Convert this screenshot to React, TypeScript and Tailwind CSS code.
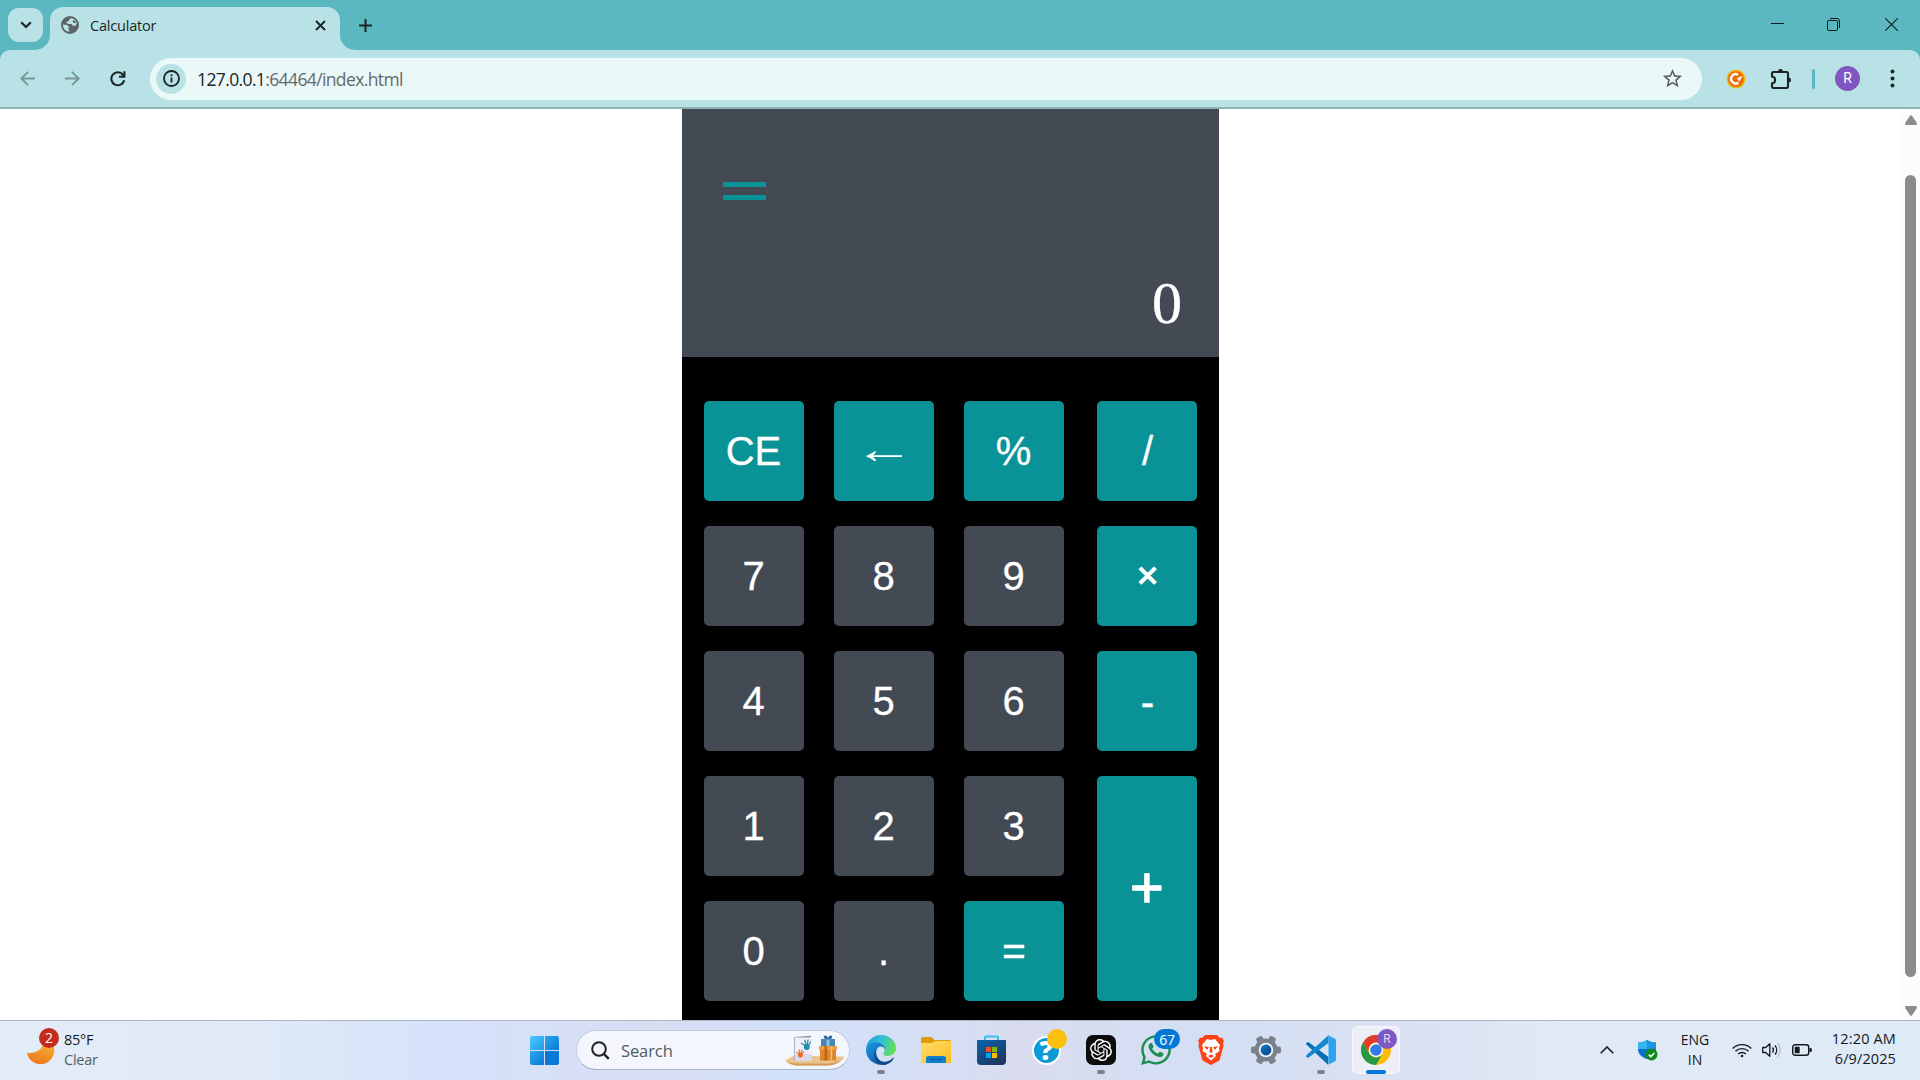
import React from "react";
import { MdPublic, MdOutlineStarBorder } from "react-icons/md";
import { SiOpenai } from "react-icons/si";
import { FaWhatsapp } from "react-icons/fa";

const TEAL = "bg-[#0a9396]";
const SLATE = "bg-[#444a54]";

function TabStrip() {
  return (
    <div className="flex h-[50px] bg-[#5bb8c1] pl-2">
      <button className="mt-2 flex h-[34px] w-[35px] items-center justify-center rounded-[11px] bg-[#b8e2e5]">
        <svg width="12" height="8" viewBox="0 0 12 8" fill="none" stroke="#1c2426" strokeWidth="2.2">
          <path d="M1.2 1.2 6 6l4.8-4.8" />
        </svg>
      </button>
      <svg className="mt-[35px] -ml-[8px]" width="15" height="15" viewBox="0 0 15 15">
        <path d="M15 0A15 15 0 0 1 0 15H15Z" fill="#b8e2e5" />
      </svg>
      <div className="mt-[7px] flex h-[43px] w-[290px] items-center rounded-t-[13px] bg-[#b8e2e5] pr-[15px] pb-[7px] pl-[11px]">
        <svg width="18" height="18" viewBox="0 0 18 18">
          <circle cx="9" cy="9" r="9" fill="#5f6368" />
          <path d="M10 2.200 8.200 3.200 7.800 5 5.800 5.500 5.500 7.300 7.500 8h3l1.500 1.800h2.500l1.300-2.300C15.500 4.500 13.500 2.500 10 2.200ZM2 8.500l4 .5 2.200 2-1 1.500 1.300 3.300C4.500 15.500 1.800 12.500 2 8.500Z" fill="#b8e2e5" />
          <path d="m12 4.300 2 .4 1 1.800-1.500.7-1.700-1Z" fill="#5f6368" />
        </svg>
        <span className="mt-[1px] ml-[11px] flex-1 font-['Open_Sans',sans-serif] text-[14.5px] leading-5 tracking-[-0.2px] text-[#1c2426]">Calculator</span>
        <svg className="mr-[-1px]" width="11" height="11" viewBox="0 0 11 11" stroke="#1c2426" strokeWidth="1.900">
          <path d="m1 1 9 9M10 1l-9 9" />
        </svg>
      </div>
      <svg className="mt-[35px]" width="15" height="15" viewBox="0 0 15 15">
        <path d="M0 0A15 15 0 0 0 15 15H0Z" fill="#b8e2e5" />
      </svg>
      <svg className="mt-[19px] ml-[4px]" width="13" height="13" viewBox="0 0 13 13" stroke="#1c2426" strokeWidth="2">
        <path d="M6.500 0v13M0 6.500h13" />
      </svg>
      <div className="ml-auto flex pr-[22px]">
        <svg className="mt-[18px] mr-[43px]" width="13" height="13" viewBox="0 0 13 13" stroke="#101818">
          <path d="M0 5.500h13" />
        </svg>
        <svg className="mt-[18px] mr-[45px]" width="13" height="13" viewBox="0 0 13 13" fill="none" stroke="#101818">
          <rect x=".5" y="2.500" width="10" height="10" rx="1.2" />
          <path d="M3 .5h7a2.500 2.500 0 0 1 2.500 2.500v7" />
        </svg>
        <svg className="mt-[18px]" width="13" height="13" viewBox="0 0 13 13" stroke="#101818" strokeWidth="1.1">
          <path d="m.3.3 12.400 12.400M12.700.3.3 12.700" />
        </svg>
      </div>
    </div>
  );
}

function Toolbar() {
  return (
    <div className="bg-[#5bb8c1]">
      <div className="flex h-[59px] items-center rounded-t-[10px] border-b-2 border-[#8fb3b7] bg-[#b8e2e5] pl-5">
        <svg width="15" height="15" viewBox="0 0 15 15" fill="none" stroke="#7a9699" strokeWidth="1.9">
          <path d="M15 7.500H1.500M8 .8 1.300 7.500 8 14.200" />
        </svg>
        <svg className="ml-[30px]" width="15" height="15" viewBox="0 0 15 15" fill="none" stroke="#7a9699" strokeWidth="1.9">
          <path d="M0 7.500h13.500M7 .8l6.700 6.700L7 14.200" />
        </svg>
        <svg className="ml-[30px]" width="16" height="16" viewBox="0 0 16 16" fill="none" stroke="#1c2426" strokeWidth="2.1">
          <path d="M14.200 9.200A6.500 6.500 0 1 1 13 3.800l1 1.500M14.400.3v5.400H9" />
        </svg>
        <div className="ml-[24px] flex h-[42px] w-[1552px] items-center rounded-full bg-[#ebf8f8] pr-[18px] pl-[6px]">
          <div className="flex h-[30px] w-[30px] items-center justify-center rounded-full bg-[#b8e2e5]">
            <svg width="17" height="17" viewBox="0 0 17 17" fill="none" stroke="#1c2426" strokeWidth="1.8">
              <circle cx="8.500" cy="8.500" r="7.500" />
              <path d="M8.500 7.500v5M8.500 4.300v2" />
            </svg>
          </div>
          <div className="mt-[1px] ml-[11px] flex-1 font-['Open_Sans',sans-serif] text-[17.5px] leading-6 tracking-[-0.620px] text-[#1c2426]">
            127.0.0.1<span className="text-[#62696b]">:64464/index.html</span>
          </div>
          <MdOutlineStarBorder className="h-[23px] w-[23px] text-[#565c5e]" />
        </div>
        <svg className="ml-[24px]" width="20" height="20" viewBox="0 0 20 20">
          <circle cx="10" cy="10" r="8.700" fill="#ed6c05" stroke="#f6b90c" strokeWidth="1.700" strokeDasharray="3.200 .7" />
          <path d="M12 5.800a4.600 4.600 0 1 0 .4 7.800" fill="none" stroke="#fff" strokeWidth="2.500" />
          <path d="m16.700 6.800-6.200 2.700 1.900 1 .6 2.600Z" fill="#fff" />
        </svg>
        <svg className="ml-[24px]" width="22" height="22" viewBox="0 0 22 22" fill="none" stroke="#1c2426" strokeWidth="2.100">
          <path d="M3.200 4h13.600q1.200 0 1.200 1.200v13.600q0 1.200-1.200 1.200H3.200Q2 20 2 18.800V15.500c4.200-.8 4.200-6.200 0-7V5.200Q2 4 3.200 4Z" />
          <path d="M8 3.500a2.500 2.500 0 0 1 5 0ZM18.500 9.500a2.500 2.500 0 0 1 0 5Z" fill="#1c2426" stroke="none" />
        </svg>
        <div className="ml-[20px] h-5 w-[3px] rounded-full bg-[#5bb8c1]" />
        <div className="ml-[20px] flex h-[25px] w-[25px] items-center justify-center rounded-full bg-[#7e57c2] font-[Roboto,sans-serif] text-[14px] text-white">R</div>
        <svg className="ml-[30px]" width="5" height="19" viewBox="0 0 5 19" fill="#1c2426">
          <circle cx="2.500" cy="2.500" r="2" />
          <circle cx="2.500" cy="9.500" r="2" />
          <circle cx="2.500" cy="16.500" r="2" />
        </svg>
      </div>
    </div>
  );
}

interface KeyProps {
  label: string;
  teal?: boolean;
  size?: string;
  glyph?: string;
}

function Key({ label, teal = false, size = "h-[100px]", glyph = "pr-px text-[40px] [-webkit-text-stroke:0.3px_white]" }: KeyProps) {
  return (
    <button className={`flex w-[100px] items-center justify-center rounded-[5px] leading-none text-white ${size} ${teal ? TEAL : SLATE}`}>
      <span className={glyph}>{label}</span>
    </button>
  );
}

function Calculator() {
  const digits = ["7", "8", "9", "4", "5", "6", "1", "2", "3", "0", "."];
  return (
    <div className="flex h-full w-[537px] flex-col bg-black">
      <div className={`flex h-[248px] flex-col justify-between px-[37px] ${SLATE}`}>
        <div className="mt-[73px] ml-[4px] flex flex-col gap-2">
          <div className={`h-[5px] w-[43px] ${TEAL}`} />
          <div className={`h-[5px] w-[43px] ${TEAL}`} />
        </div>
        <div className="mb-[20px] text-right font-['Liberation_Serif',serif] text-[60px] leading-[68px] text-white [-webkit-text-stroke:0.4px_white]">0</div>
      </div>
      <div className="flex gap-[33px] pt-[44px] pl-[22px] font-['Liberation_Sans',sans-serif]">
        <div className="grid grid-cols-[100px_100px_100px] gap-x-[30px] gap-y-[25px]">
          <Key label="CE" teal />
          <Key label="←" teal glyph="inline-block origin-center scale-x-150 pb-[5px] text-[40px]" />
          <Key label="%" teal />
          {digits.map((d) => (
            <Key key={d} label={d} />
          ))}
          <Key label="=" teal glyph="text-[40px] [-webkit-text-stroke:0.7px_white]" />
        </div>
        <div className="flex flex-col gap-[25px]">
          <Key label="/" teal glyph="pl-px text-[40px] [-webkit-text-stroke:0.3px_white]" />
          <Key label="×" teal glyph="pb-px pl-px text-[37px] [-webkit-text-stroke:1.200px_white]" />
          <Key label="-" teal glyph="pt-[2px] pl-px text-[40px] [-webkit-text-stroke:0.5px_white]" />
          <Key label="+" teal size="h-[225px]" glyph="pb-[3px] text-[58px] [-webkit-text-stroke:1.300px_white]" />
        </div>
      </div>
    </div>
  );
}

function ScrollBar() {
  return (
    <div className="flex w-[19px] flex-col items-center bg-[#fcfcfc]">
      <svg className="mt-[6px]" width="12" height="10" viewBox="0 0 12 10" fill="#8b8b8b">
        <path d="M5 .8q1-1 2 0l4.700 7q.8 2.200-1 2.200H1.300Q-.5 10 .3 7.800Z" />
      </svg>
      <div className="mt-[50px] h-[802px] w-[11px] rounded-full bg-[#8b8b8b]" />
      <svg className="mt-[29px]" width="12" height="10" viewBox="0 0 12 10" fill="#8b8b8b">
        <path d="M5 9.200q1 1 2 0l4.700-7Q12.500 0 10.700 0H1.300Q-.5 0 .3 2.200Z" />
      </svg>
    </div>
  );
}

function AppSlot({ children, running = false, active = false }: { children: React.ReactNode; running?: boolean; active?: boolean }) {
  return (
    <div className={`relative flex h-12 w-12 items-center justify-center rounded-[5px] ${active ? "border border-white/60 bg-[#eceef8]" : ""}`}>
      {children}
      {running && <div className="absolute bottom-0 left-[20px] h-1 w-2 rounded-full bg-[#7d8089]" />}
      {active && <div className="absolute -bottom-px left-[13px] h-1 w-5 rounded-full bg-[#0078d4]" />}
    </div>
  );
}

function StartLogo() {
  return (
    <svg width="29" height="29" viewBox="0 0 29 29">
      <defs>
        <linearGradient id="win" x1="0" y1="0" x2="1" y2="1">
          <stop offset="0" stopColor="#4cc9fb" />
          <stop offset="1" stopColor="#1d9ae8" />
        </linearGradient>
        <linearGradient id="win2" x1="0" y1="0" x2="1" y2="1">
          <stop offset="0" stopColor="#2ba6ee" />
          <stop offset="1" stopColor="#0a7bd8" />
        </linearGradient>
      </defs>
      <path d="M1.500 0H14v14H0V1.500Z" fill="url(#win)" />
      <path d="M15 0h12.500L29 1.500V14H15Z" fill="url(#win2)" />
      <path d="M0 15h14v14H1.500L0 27.500Z" fill="url(#win2)" />
      <path d="M15 15h14v12.500L27.500 29H15Z" fill="#0a78d6" />
    </svg>
  );
}

function GiftArt() {
  return (
    <svg width="60" height="32" viewBox="0 0 60 32">
      <path d="M0 25.500 8 21l50 .5c2.500 0 1 2-1 3.500-4 3.500-8 5.500-14 5.500H12c-4 0-8-2-12-5Z" fill="#eac48c" />
      <path d="M0 25.500q5 4.500 12 5h31c6-.5 10-2.500 13-5-7 2.500-11 3-16 3H12c-5 0-9-.8-12-3Z" fill="#d29a58" />
      <path d="M9 2 26 .8v2L10 3.500Z" fill="#8b93a8" />
      <path d="M9 2h1.200v24L9 25.500Z" fill="#aab3c8" />
      <path d="M10 2.500h17v23H10Z" fill="#f1f0fa" />
      <path d="M10 19h17v6.500H10Z" fill="#dcd8ec" />
      <g stroke="#1b91ae" strokeLinecap="round" strokeWidth="1.300">
        <path d="m20 10.500-3.500-2m4.500 1.500-1.200-4.500m2.500 4.500.7-5m.5 5.500 2-3.500" />
        <circle cx="21.800" cy="12" r="2.300" fill="#1b91ae" />
      </g>
      <g stroke="#f06a25" strokeLinecap="round" strokeWidth="1.100">
        <path d="m14 19-2.200-1.800m3 1.200-.8-3.700m2 3.700.8-3.700m.2 4 1.800-2" />
        <circle cx="15.500" cy="20.300" r="1.900" fill="#f06a25" />
      </g>
      <path d="M34 11h18v4H34Z" fill="#ef9d47" />
      <path d="M35 15h16v10.500H35Z" fill="#df8429" />
      <path d="M39.500 11H42v14.500h-2.500Z" fill="#b8661a" />
      <path d="M45.500 11h1.700v14.500h-1.700Z" fill="#f8bd6d" />
      <path d="M36 4h14v7H36Z" fill="#4686b5" />
      <path d="M41.500 4h3v7h-3Z" fill="#8ac6e6" />
      <path d="M43 4.500c-5-.5-5-3-3-4C41.500 0 43 2.500 43 3.500 43 2.500 44.500 0 46 .5c2 1 2 3.500-3 4Z" fill="#2a6598" />
    </svg>
  );
}

function EdgeIcon() {
  return (
    <svg width="30" height="30" viewBox="0 0 30 30">
      <defs>
        <linearGradient id="edgeTop" x1="0" y1=".3" x2="1" y2=".6">
          <stop offset="0" stopColor="#1d9fe0" />
          <stop offset=".5" stopColor="#35c1d4" />
          <stop offset="1" stopColor="#6ae04f" />
        </linearGradient>
        <linearGradient id="edgeBody" x1="0" y1="0" x2="1" y2="1">
          <stop offset="0" stopColor="#1b9be0" />
          <stop offset="1" stopColor="#0b4e9e" />
        </linearGradient>
      </defs>
      <path d="M.2 13C1 5.500 7.500 0 15 0c9 0 15 6.500 15 13 0 5-4 8-8.500 8-3.500 0-5-1.300-4-2.800 2.800-4.200-.5-8.200-5.500-8.200-5 0-9.500 1.500-11.800 3Z" fill="url(#edgeTop)" />
      <path d="M.2 13C2 9.500 6 7.500 10 7.500c5 0 9 3 9 7-.5-2-2-3-4-3-4 0-5.500 4-4.500 8 1 4.500 4.500 8.500 10 9.500C11 32.500-1.500 25 .2 13Z" fill="url(#edgeBody)" />
      <path d="M12.500 12.500c-4 2-4 10 1.500 13 4.500 2.500 9.500 1 13-2.800.8-.8 1 .2.5 1C24 30 16 32 11.500 27.500 6.500 23 7.500 15 12.500 12.500Z" fill="#114a8b" />
      <path d="M12.300 13.800c1.700-2.300 6-1.500 6 2 0 1.500-1 2-1 3.200 0 1.700 3.700 3.200 8 1.200-4 4-10 3.500-12.300-.2-1.300-2-1.500-4.500-.7-6.200Z" fill="#d9e0f4" />
    </svg>
  );
}

function FolderIcon() {
  return (
    <svg width="30" height="26" viewBox="0 0 30 26">
      <defs>
        <linearGradient id="folder" x1="0" y1="0" x2="1" y2="1">
          <stop offset="0" stopColor="#ffdc6b" />
          <stop offset="1" stopColor="#fcc021" />
        </linearGradient>
      </defs>
      <path d="M0 1.500Q0 0 1.500 0h8q1 0 1.800.8L13.500 3H28q2 0 2 2v5H0Z" fill="#dd9c05" />
      <path d="M0 6h10.500q1 0 1.800-.8L14 4h14.500q1.500 0 1.500 1.500V26H1.500Q0 26 0 24.500Z" fill="url(#folder)" />
      <path d="M5 26v-4.500Q5 19 7.500 19h15q2.500 0 2.500 2.500V26Z" fill="#137fce" />
      <path d="M9.500 22.500h11" stroke="#0b5a9e" strokeWidth="1.300" strokeLinecap="round" />
    </svg>
  );
}

function StoreIcon() {
  return (
    <svg width="29" height="30" viewBox="0 0 29 30">
      <defs>
        <linearGradient id="store" x1="0" y1="0" x2=".7" y2="1">
          <stop offset="0" stopColor="#0c63ae" />
          <stop offset="1" stopColor="#1f365f" />
        </linearGradient>
      </defs>
      <path d="M8 6V2.500Q8 1.500 9 1.500h11q1 0 1 1V6" fill="none" stroke="#35c0f0" strokeWidth="2" />
      <path d="M0 5h29v21q0 4-4 4H4q-4 0-4-4Z" fill="url(#store)" />
      <path d="M9 12h5v5H9Z" fill="#f25022" />
      <path d="M15 12h5v5h-5Z" fill="#7fba00" />
      <path d="M9 18h5v5H9Z" fill="#00a4ef" />
      <path d="M15 18h5v5h-5Z" fill="#ffb900" />
    </svg>
  );
}

function BraveIcon() {
  return (
    <svg width="26" height="30" viewBox="0 0 26 30">
      <path d="M7 0h12l3 3 2-.5 2 3.500-1 2 .5 3-4 14.500L13 30l-8.500-4.500L.5 11 1 8 0 6l2-3.500L4 3Z" fill="#fb4218" />
      <path d="m13 5 4-1 5 6-1 3 .5 3-4.500 3 1 2-5 4.500L8 21l1-2-4.500-3 .5-3-1-3 5-6Z" fill="#fff" />
      <path d="m6 11 5 1.200-2 2.800ZM20 11l-5 1.200 2 2.800ZM12 12h2l.5 5-1.500 1-1.500-1ZM10 21l3-1.500 3 1.500-3 2Z" fill="#fb4218" />
    </svg>
  );
}

function SettingsIcon() {
  return (
    <svg width="30" height="30" viewBox="0 0 30 30">
      <defs>
        <linearGradient id="gearHub" x1="0" y1="0" x2="1" y2="1">
          <stop offset="0" stopColor="#1273c9" />
          <stop offset="1" stopColor="#0b4487" />
        </linearGradient>
      </defs>
      <g fill="#79818a">
        <circle cx="15" cy="15" r="11.500" />
        {[0, 60, 120].map((a) => (
          <rect key={a} x="0" y="11.500" width="30" height="7" rx="2" transform={`rotate(${a} 15 15)`} />
        ))}
      </g>
      <circle cx="15" cy="15" r="7.300" fill="#eef1f7" />
      <circle cx="15" cy="15" r="5.400" fill="url(#gearHub)" />
    </svg>
  );
}

function CodeIcon() {
  return (
    <svg width="30" height="30" viewBox="0 0 30 30">
      <path d="M22.500 22 2.700 7.300Q2 6.800 1.300 7.300L.3 8.200q-.7.700 0 1.400L22 29.800Z" fill="#0b6fb5" />
      <path d="M.3 20.300q-.7.700 0 1.400l1 .9q.7.500 1.400 0L22.500 8V.200Z" fill="#1587ce" />
      <path d="m21.500 0 6.800 3.200q1.700.8 1.700 2.500v18.600q0 1.700-1.700 2.500L21.500 30q1-.5 1-2V2q0-1.500-1-2Z" fill="#2aa4ef" />
    </svg>
  );
}

function ChromeIcon() {
  return (
    <svg width="30" height="30" viewBox="0 0 30 30">
      <circle cx="15" cy="15" r="15" fill="#fbbc05" />
      <path d="M2 7.500A15 15 0 0 1 28 7.500H15A7.500 7.500 0 0 0 8.500 18.750Z" fill="#e33b2e" />
      <path d="M2 7.500 8.500 18.750A7.500 7.500 0 0 0 21.500 18.750L15 30A15 15 0 0 1 2 7.500Z" fill="#249a48" />
      <circle cx="15" cy="15" r="7.200" fill="#fff" />
      <circle cx="15" cy="15" r="5.800" fill="#3478ea" />
    </svg>
  );
}

function Weather() {
  return (
    <div className="flex h-full w-[500px] pl-[27px] font-['Open_Sans',sans-serif] text-[14.5px] leading-5">
      <div className="relative mt-[13px] h-[30px] w-[28px]">
        <svg width="28" height="30" viewBox="0 0 28 30">
          <defs>
            <linearGradient id="moon" x1=".7" y1="0" x2=".4" y2="1">
              <stop offset="0" stopColor="#f8bc38" />
              <stop offset="1" stopColor="#ed781d" />
            </linearGradient>
          </defs>
          <path d="M0 19c10 1 18-5 18-16 6 1 9 6 9 11A13.500 13.500 0 0 1 0 19Z" fill="url(#moon)" />
        </svg>
        <div className="absolute -top-[6px] left-[12px] flex h-5 w-5 items-center justify-center rounded-full bg-[#c42b1c] text-[14px] leading-none text-white">2</div>
      </div>
      <div className="mt-[9px] ml-[9px] tracking-[-0.25px]">
        <div className="text-[#15191d]">85°F</div>
        <div className="text-[#555c64]">Clear</div>
      </div>
    </div>
  );
}

function Tray() {
  return (
    <div className="ml-auto flex h-full pr-[24px] font-['Open_Sans',sans-serif] text-[14px] leading-5 text-[#15191d]">
      <svg className="mt-[25px]" width="14" height="8" viewBox="0 0 14 8" fill="none" stroke="#15191d" strokeWidth="1.600">
        <path d="M.7 7.300 7 1l6.300 6.300" />
      </svg>
      <svg className="mt-[19px] ml-[24px]" width="20" height="21" viewBox="0 0 20 21">
        <path d="M9 0c3 2 6 2.500 9 2.500V9c0 6-5 8.500-9 10-4-1.500-9-4-9-10V2.500C3 2.500 6 2 9 0Z" fill="#0b6fd0" />
        <path d="M9 0v9H0V2.500C3 2.500 6 2 9 0Z" fill="#35b4f0" />
        <path d="M9 0c3 2 6 2.500 9 2.500V9H9Z" fill="#1b93e2" />
        <circle cx="13.500" cy="14.500" r="6" fill="#0f8a1b" />
        <path d="m10.800 14.600 2 2 3.600-3.700" fill="none" stroke="#fff" strokeWidth="1.500" />
      </svg>
      <div className="mt-[9px] ml-[22px] w-[30px] text-center">
        <div>ENG</div>
        <div>IN</div>
      </div>
      <svg className="mt-[22px] ml-[22px]" width="20" height="15" viewBox="0 0 20 15" fill="none" stroke="#15191d" strokeWidth="1.400">
        <path d="M.7 5.500a13.200 13.200 0 0 1 18.600 0M3.500 8.300a9.200 9.200 0 0 1 13 0M6.200 11a5.400 5.400 0 0 1 7.600 0" />
        <circle cx="10" cy="13" r="1.300" fill="#15191d" stroke="none" />
      </svg>
      <svg className="mt-[21px] ml-[10px]" width="20" height="16" viewBox="0 0 20 16" fill="none" stroke="#15191d" strokeWidth="1.300">
        <path d="M.7 5.500h3L7.800 1.700v12.600L3.700 10.500h-3Z" strokeLinejoin="round" />
        <path d="M10.500 5.500a4 4 0 0 1 0 5M13 3.500a7 7 0 0 1 0 9" />
        <path d="M15.500 1.200a10 10 0 0 1 0 13.600" stroke="#b5bcc5" />
      </svg>
      <svg className="mt-[23px] ml-[10px]" width="20" height="12" viewBox="0 0 20 12">
        <rect x=".7" y=".7" width="16" height="10.600" rx="2.500" fill="none" stroke="#15191d" strokeWidth="1.400" />
        <rect x="2.700" y="2.700" width="5" height="6.600" rx=".8" fill="#15191d" />
        <path d="M17.500 4h1q1.500 0 1.500 2t-1.500 2h-1Z" fill="#15191d" />
      </svg>
      <div className="mt-[8px] ml-[18px] w-[66px] text-right text-[14.5px] whitespace-nowrap">
        <div className="tracking-[0.150px]">12:20 AM</div>
        <div className="tracking-[0.100px]">6/9/2025</div>
      </div>
    </div>
  );
}

function Taskbar() {
  return (
    <div className="flex h-[60px] border-t border-[#aab4c6] bg-[linear-gradient(90deg,#e2edf8_0px,#e0eaf7_250px,#d5e2fa_440px,#d8def4_660px,#d2e1fa_800px,#d9dcef_1020px,#d4dff4_1200px,#dae1f2_1400px,#e0eaf5_1560px,#deeaf6_1920px)]">
      <Weather />
      <div className="flex h-full items-start gap-[7px] pt-[5px] pl-[20px]">
        <AppSlot>
          <StartLogo />
        </AppSlot>
        <div className="mt-[4px] ml-[1px] flex h-[40px] w-[274px] items-center rounded-full border border-[#c3cce2] border-b-[#a9b2c8] bg-[#f3f6fd] pl-[14px]">
          <svg width="19" height="19" viewBox="0 0 19 19" fill="none" stroke="#222" strokeWidth="2">
            <circle cx="8" cy="8" r="6.800" />
            <path d="m12.800 12.800 5 5" strokeWidth="2.400" />
          </svg>
          <span className="mt-[1px] ml-[11px] font-['Open_Sans',sans-serif] text-[16.500px] leading-5 tracking-[-0.1px] text-[#555a62]">Search</span>
          <div className="mt-[1px] mr-[4px] ml-auto">
            <GiftArt />
          </div>
        </div>
        <AppSlot running>
          <EdgeIcon />
        </AppSlot>
        <AppSlot>
          <FolderIcon />
        </AppSlot>
        <AppSlot>
          <StoreIcon />
        </AppSlot>
        <AppSlot>
          <div className="flex h-[29px] w-[29px] items-center justify-center rounded-full border-2 border-white bg-[#0c9ad8] font-['Open_Sans',sans-serif] text-[26px] leading-none font-extrabold text-white">?</div>
          <div className="absolute top-[3px] left-[25px] h-5 w-5 rounded-full bg-[#fdc00f]" />
        </AppSlot>
        <AppSlot running>
          <div className="flex h-[30px] w-[30px] items-center justify-center rounded-[7px] bg-[#0c0c0c]">
            <SiOpenai className="h-[22px] w-[22px] text-white" />
          </div>
        </AppSlot>
        <AppSlot>
          <FaWhatsapp className="h-[34px] w-[34px] text-[#1e8e50]" />
          <div className="absolute top-[3px] left-[22px] flex h-5 w-[26px] items-center justify-center rounded-full bg-[#0078d4] font-['Open_Sans',sans-serif] text-[14px] tracking-[-0.300px] text-white">67</div>
        </AppSlot>
        <AppSlot>
          <BraveIcon />
        </AppSlot>
        <AppSlot>
          <SettingsIcon />
        </AppSlot>
        <AppSlot running>
          <CodeIcon />
        </AppSlot>
        <AppSlot active>
          <ChromeIcon />
          <div className="absolute top-[2px] left-[24px] flex h-5 w-5 items-center justify-center rounded-full bg-[#7e57c2] font-[Roboto,sans-serif] text-[12px] text-[#e3d9f3]">R</div>
        </AppSlot>
      </div>
      <Tray />
    </div>
  );
}

export default function App() {
  return (
    <div className="flex h-[1080px] w-[1920px] flex-col overflow-hidden bg-white">
      <TabStrip />
      <Toolbar />
      <div className="flex h-[911px] overflow-hidden">
        <main className="flex-1 pl-[682px]">
          <Calculator />
        </main>
        <ScrollBar />
      </div>
      <Taskbar />
    </div>
  );
}
